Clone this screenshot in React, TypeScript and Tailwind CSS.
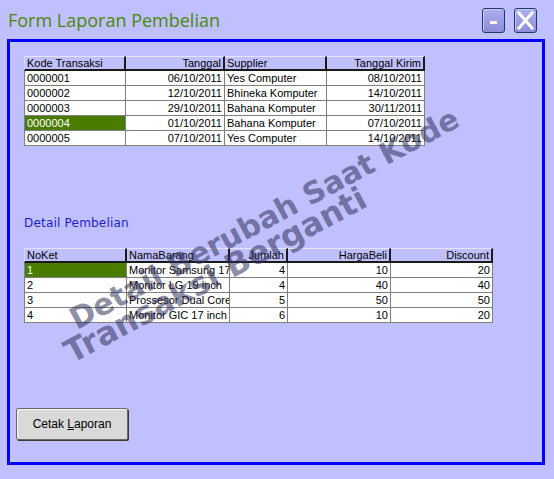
import React from "react";

interface Column {
  label: string;
  width: number;
  align: "left" | "right";
}

const transaksiCols: Column[] = [
  { label: "Kode Transaksi", width: 102, align: "left" },
  { label: "Tanggal", width: 99, align: "right" },
  { label: "Supplier", width: 102, align: "left" },
  { label: "Tanggal Kirim", width: 98, align: "right" },
];

const transaksiRows = [
  ["0000001", "06/10/2011", "Yes Computer", "08/10/2011"],
  ["0000002", "12/10/2011", "Bhineka Komputer", "14/10/2011"],
  ["0000003", "29/10/2011", "Bahana Komputer", "30/11/2011"],
  ["0000004", "01/10/2011", "Bahana Komputer", "07/10/2011"],
  ["0000005", "07/10/2011", "Yes Computer", "14/10/2011"],
];

const detailCols: Column[] = [
  { label: "NoKet", width: 103, align: "left" },
  { label: "NamaBarang", width: 103, align: "left" },
  { label: "Jumlah", width: 58, align: "right" },
  { label: "HargaBeli", width: 103, align: "right" },
  { label: "Discount", width: 102, align: "right" },
];

const detailRows = [
  ["1", "Monitor Samsung 17", "4", "10", "20"],
  ["2", "Monitor LG 19 inch", "4", "40", "40"],
  ["3", "Prossesor Dual Core", "5", "50", "50"],
  ["4", "Monitor GIC 17 inch", "6", "10", "20"],
];

function Grid({
  cols,
  rows,
  selRow,
}: {
  cols: Column[];
  rows: string[][];
  selRow: number;
}) {
  return (
    <div className="text-[11px] leading-[13px] text-black">
      <div className="flex">
        {cols.map((c, i) => (
          <div
            key={c.label}
            style={{ width: c.width }}
            className={`box-border flex h-[15px] items-center overflow-hidden whitespace-nowrap border-t border-b-2 border-r-2 border-t-[#e4e4f4] border-b-[#1a1a1a] border-r-[#1a1a1a] px-[2px] ${
              i === 0 ? "border-l border-l-[#d8d8e8]" : ""
            } ${c.align === "right" ? "justify-end" : "justify-start"}`}
          >
            {c.label}
          </div>
        ))}
      </div>
      {rows.map((r, ri) => (
        <div key={ri} className="flex">
          {r.map((v, ci) => {
            const sel = ri === selRow && ci === 0;
            return (
              <div
                key={ci}
                style={{ width: cols[ci].width }}
                className={`box-border flex h-[15px] items-center overflow-hidden whitespace-nowrap border-b border-r border-[#808080] px-[2px] ${
                  ci === 0 ? "border-l" : ""
                } ${cols[ci].align === "right" ? "justify-end" : "justify-start"} ${
                  sel ? "bg-[#4a7c00] text-white" : "bg-white"
                }`}
              >
                {v}
              </div>
            );
          })}
        </div>
      ))}
    </div>
  );
}

function WinButton({ children }: { children: React.ReactNode }) {
  return (
    <div className="flex h-[25px] w-[23px] items-center justify-center rounded-[3px] border border-[#1c3a6a] bg-gradient-to-b from-[#aeaef0] to-[#8c8cd8] shadow-[inset_1px_1px_0_#c8c8f8]">
      {children}
    </div>
  );
}

export default function App() {
  return (
    <div className="relative h-[479px] w-[554px] overflow-hidden bg-[#c0c0ff] font-['Liberation_Sans',Arial,sans-serif]">
      <div className="flex h-[39px] items-start justify-between pl-[8px] pr-[17px]">
        <div className="mt-[8px] font-['Open_Sans',sans-serif] text-[18px] font-medium leading-[24px] text-[#4a8806]">
          Form Laporan Pembelian
        </div>
        <div className="mt-[8px] flex gap-[9px]">
          <WinButton>
            <div className="mt-[4px] h-[3px] w-[7px] bg-white" />
          </WinButton>
          <WinButton>
            <svg width="17" height="19" viewBox="0 0 17 19">
              <path d="M2 2 L15 17 M15 2 L2 17" stroke="white" strokeWidth="3" strokeLinecap="square" />
            </svg>
          </WinButton>
        </div>
      </div>

      <div className="ml-[7px] box-border h-[426px] w-[538px] border-[3px] border-[#0000ff] pl-[6px] pt-[14px]">
        <div className="ml-[8px]">
          <Grid cols={transaksiCols} rows={transaksiRows} selRow={3} />
        </div>

        <div className="ml-[8px] mt-[69px] font-['DejaVu_Sans',Verdana,sans-serif] text-[12px] leading-[16px] tracking-[0.2px] text-[#1e1ec8]">
          Detail Pembelian
        </div>

        <div className="ml-[8px] mt-[17px]">
          <Grid cols={detailCols} rows={detailRows} selRow={0} />
        </div>

        <button className="mt-[85px] box-border h-[32px] w-[112px] rounded-[2px] border border-[#6a6a6a] bg-[#d9d9d9] text-[12px] text-black shadow-[1px_1px_0_#3a3a3a,inset_1px_1px_0_#f4f4f4]">
          Cetak <span className="underline">L</span>aporan
        </button>
      </div>

      {/* watermark */}
      <div className="pointer-events-none absolute left-[65px] top-[308px] origin-top-left -rotate-[28deg] whitespace-nowrap font-['DejaVu_Sans',Verdana,sans-serif] text-[30px] font-bold leading-[30px] text-[rgba(46,46,86,0.55)]">
        Detail Berubah Saat Kode
      </div>
      <div className="pointer-events-none absolute left-[59px] top-[340px] origin-top-left -rotate-[28deg] whitespace-nowrap font-['DejaVu_Sans',Verdana,sans-serif] text-[32px] font-bold leading-[32px] text-[rgba(46,46,86,0.55)]">
        Transaksi Berganti
      </div>
    </div>
  );
}
